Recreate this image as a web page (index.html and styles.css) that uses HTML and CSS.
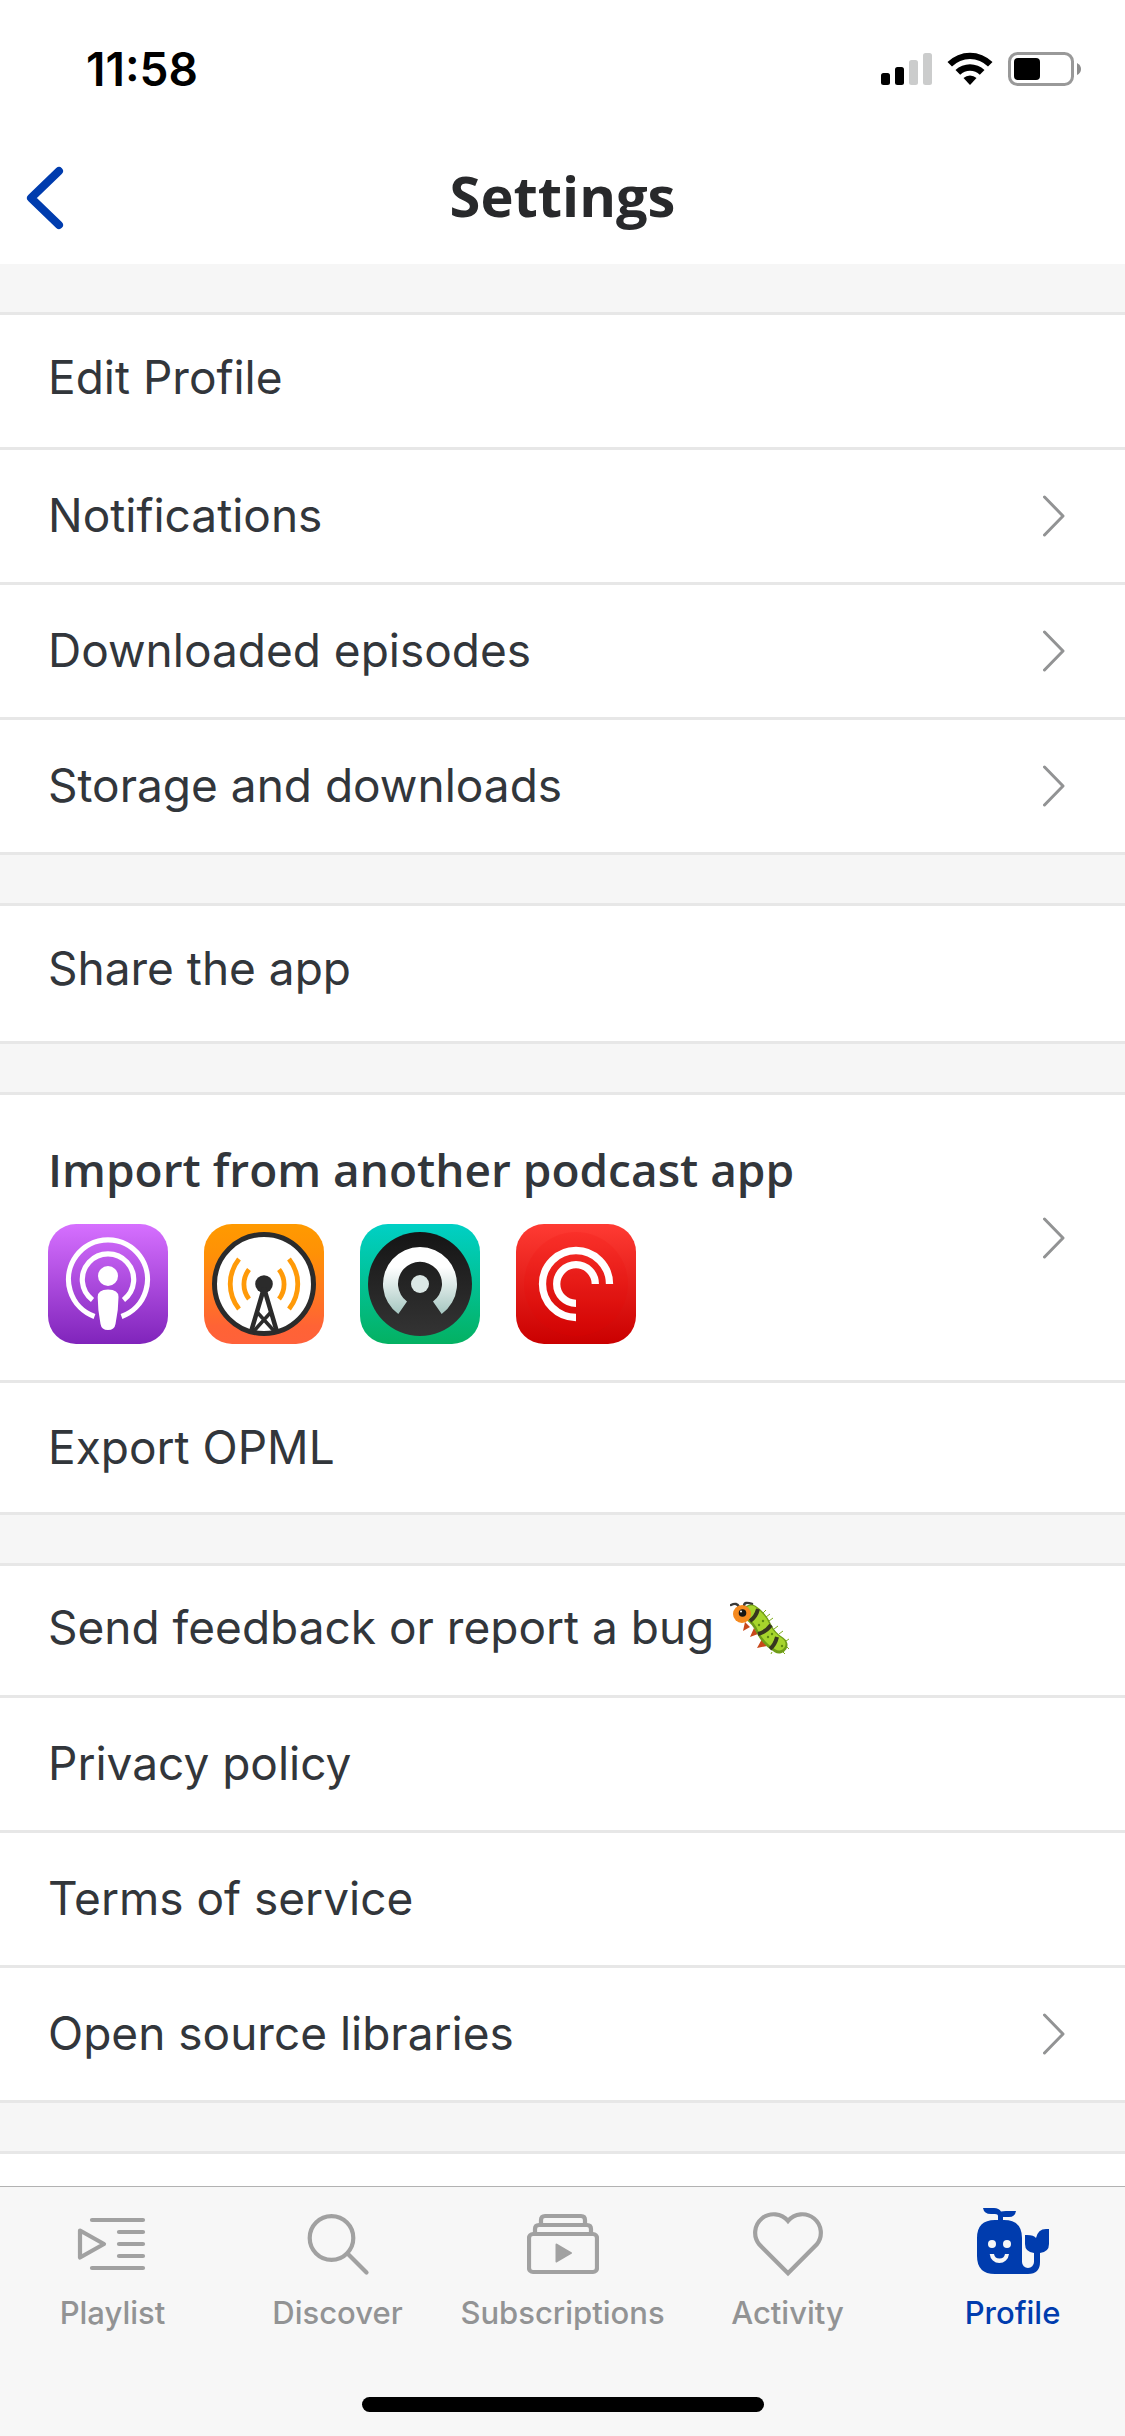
FILE: index.html
```html
<!DOCTYPE html>
<html lang="en">
<head>
  <meta charset="UTF-8">
  <meta name="viewport" content="width=device-width, initial-scale=1.0">
  <title>Settings</title>
  <link rel="stylesheet" href="styles.css">
</head>
<body>
  <!-- shared chevron -->
  <svg class="defs" width="0" height="0" aria-hidden="true">
    <symbol id="chevron" viewBox="0 0 22 42">
      <path d="M1.5 2 L20 21 L1.5 40" fill="none" stroke="#929394" stroke-width="3" stroke-linecap="round" stroke-linejoin="round"/>
    </symbol>
  </svg>

  <div class="status-bar">
    <span class="time">11:58</span>
    <div class="status-icons">
      <svg width="51" height="32" viewBox="0 0 51 32">
        <rect x="0" y="20" width="9" height="12" rx="2.5"/>
        <rect x="14" y="14" width="9" height="18" rx="2.5"/>
        <rect x="28" y="7" width="9" height="25" rx="2.5" fill="#cbcccc"/>
        <rect x="42" y="0" width="9" height="32" rx="2.5" fill="#cbcccc"/>
      </svg>
      <svg width="46" height="34" viewBox="0 0 46 34">
        <path d="M0.5 10 A32 32 0 0 1 45.500 10 L41 14.500 A25.500 25.500 0 0 0 5 14.500 Z"/>
        <path d="M8.500 18 A21 21 0 0 1 37.500 18 L32.800 22.700 A14 14 0 0 0 13.200 22.700 Z"/>
        <path d="M16.500 26 A9.500 9.500 0 0 1 29.500 26 L23 33 Z"/>
      </svg>
      <svg width="73" height="34" viewBox="0 0 73 34">
        <rect x="1.5" y="1.5" width="63" height="31" rx="8" fill="none" stroke="#999" stroke-width="3"/>
        <rect x="6" y="6" width="26" height="22" rx="4"/>
        <path d="M69 11 Q73 13 73 17 Q73 21 69 23 Z" fill="#8c8c8c"/>
      </svg>
    </div>
  </div>

  <header class="nav">
    <button class="back" aria-label="Back">
      <svg width="38" height="64" viewBox="0 0 38 64"><path d="M33 5 L5 32 L33 59" fill="none" stroke="#003cae" stroke-width="8" stroke-linecap="round" stroke-linejoin="round"/></svg>
    </button>
    <h1>Settings</h1>
  </header>

  <main>
    <section class="group">
      <a class="row" href="#"><span>Edit Profile</span></a>
      <a class="row" href="#"><span>Notifications</span><svg class="chevron"><use href="#chevron"/></svg></a>
      <a class="row" href="#"><span>Downloaded episodes</span><svg class="chevron"><use href="#chevron"/></svg></a>
      <a class="row" href="#"><span>Storage and downloads</span><svg class="chevron"><use href="#chevron"/></svg></a>
    </section>

    <section class="group">
      <a class="row tall" href="#"><span>Share the app</span></a>
    </section>

    <section class="group">
      <a class="row import" href="#">
        <div class="import-body">
          <h2>Import from another podcast app</h2>
          <div class="apps">
            <!-- Apple Podcasts -->
            <svg width="120" height="120" viewBox="0 0 120 120">
              <linearGradient id="g-podcasts" x1="0" y1="0" x2="0" y2="1"><stop offset="0" stop-color="#d670ff"/><stop offset="1" stop-color="#8024bb"/></linearGradient>
              <rect width="120" height="120" rx="28" fill="url(#g-podcasts)"/>
              <g fill="none" stroke="#fff" stroke-width="5.2">
                <path d="M46.500 92.500 A39.500 39.500 0 1 1 73.500 92.500"/>
                <path d="M44.500 76 A25.700 25.700 0 1 1 75.500 76"/>
              </g>
              <circle cx="60" cy="52" r="10" fill="#fff"/>
              <path d="M49.700 73 Q49.700 65.500 60 65.500 Q70.500 65.500 70.500 73 Q70.500 86 67.500 100 Q66.500 106 60 106 Q53.500 106 52.500 100 Q49.700 86 49.700 73 Z" fill="#fff"/>
            </svg>
            <!-- Overcast -->
            <svg width="120" height="120" viewBox="0 0 120 120">
              <linearGradient id="g-overcast" x1="0" y1="0" x2="0" y2="1"><stop offset="0" stop-color="#ff9a00"/><stop offset=".25" stop-color="#ff9106"/><stop offset=".85" stop-color="#ff6335"/><stop offset="1" stop-color="#ff613a"/></linearGradient>
              <rect width="120" height="120" rx="28" fill="url(#g-overcast)"/>
              <circle cx="60" cy="60" r="49.500" fill="#fff" stroke="#2b2b2b" stroke-width="5"/>
              <g fill="none" stroke="#ff9a08" stroke-width="4.800">
                <path d="M35 35 A40 40 0 0 0 35 85"/>
                <path d="M45 45.500 A24 24 0 0 0 45 75"/>
                <path d="M75 45.500 A24 24 0 0 1 75 75"/>
                <path d="M85 35 A40 40 0 0 1 85 85"/>
              </g>
              <circle cx="60" cy="60" r="8.800" fill="#2b2b2b"/>
              <g fill="none" stroke="#2b2b2b">
                <path d="M60 64 L47 108 M60 64 L73 108" stroke-width="4.500"/>
                <path d="M53 88 L71 108 M67 88 L49 108" stroke-width="3.500"/>
              </g>
            </svg>
            <!-- Castro -->
            <svg width="120" height="120" viewBox="0 0 120 120">
              <linearGradient id="g-castro" x1="0" y1="0" x2="0" y2="1"><stop offset="0" stop-color="#00d0c5"/><stop offset="1" stop-color="#04b162"/></linearGradient>
              <linearGradient id="g-disc" x1="0" y1="0" x2="0" y2="1"><stop offset="0" stop-color="#151515"/><stop offset="1" stop-color="#343434"/></linearGradient>
              <linearGradient id="g-ring" x1="0" y1="0" x2="0" y2="1"><stop offset=".3" stop-color="#fff"/><stop offset="1" stop-color="#a5c6c0"/></linearGradient>
              <rect width="120" height="120" rx="28" fill="url(#g-castro)"/>
              <circle cx="60" cy="60" r="52" fill="url(#g-disc)"/>
              <path d="M38.300 90 A37 37 0 1 1 81.700 90 L73 77.500 A22 22 0 1 0 47 77.500 Z" fill="url(#g-ring)"/>
              <circle cx="60" cy="60" r="9" fill="#dbe7e5"/>
            </svg>
            <!-- Pocket Casts -->
            <svg width="120" height="120" viewBox="0 0 120 120">
              <linearGradient id="g-pocket" x1="0" y1="0" x2="0" y2="1"><stop offset="0" stop-color="#ff3b33"/><stop offset="1" stop-color="#ca0000"/></linearGradient>
              <rect width="120" height="120" rx="28" fill="url(#g-pocket)"/>
              <circle cx="60" cy="60" r="52" fill="#e00" opacity=".12"/>
              <g fill="none" stroke="#fff" stroke-width="7.300">
                <path d="M60 93.500 A33.500 33.500 0 1 1 93.500 60"/>
                <path d="M60 79.300 A19.300 19.300 0 1 1 79.300 60"/>
              </g>
            </svg>
          </div>
        </div>
        <svg class="chevron"><use href="#chevron"/></svg>
      </a>
      <a class="row short" href="#"><span>Export OPML</span></a>
    </section>

    <section class="group">
      <a class="row short" href="#">
        <span>Send feedback or report a bug</span>
        <svg class="bug" width="60" height="56" viewBox="0 0 60 56" role="img" aria-label="caterpillar">
          <g fill="none" stroke="#3a3a38" stroke-width="2.500" stroke-linecap="round">
            <path d="M9 7 Q7 2 1 5"/>
            <path d="M14 6 Q14 1 22 4"/>
          </g>
          <path d="M15 22 L13 31 L20 27 Z M24 28 L20 37 L28 34 Z M32 39 L27 48 L37 46 Z" fill="#c8481b"/>
          <path d="M21 13 Q29 18 34 29 Q39 39 49 45" fill="none" stroke="#6f9c18" stroke-width="17" stroke-linecap="round"/>
          <path d="M21 12 Q30 18 34 28 Q39 38 49 44" fill="none" stroke="#a6d52c" stroke-width="13" stroke-linecap="round"/>
          <g fill="none" stroke="#37371f" stroke-width="4">
            <path d="M20 21 Q26 17 28 9"/>
            <path d="M28 34 Q36 32 41 25"/>
            <path d="M40 49 Q45 45 47 37"/>
          </g>
          <g stroke="#7fae1c" stroke-width="1">
            <path d="M33 13 l3 -3 M36 17 l4 -3 M39 21 l4 -3 M44 29 l4 -3 M49 34 l4 -3 M56 41 l3 -2 M57 47 l2 2 M53 52 l2 2 M42 52 l-1 2"/>
          </g>
          <g fill="#5d8b12">
            <circle cx="29" cy="25" r="1.200"/><circle cx="33" cy="21" r="1.200"/><circle cx="38" cy="37" r="1.200"/><circle cx="42" cy="34" r="1.200"/><circle cx="52" cy="46" r="1.200"/>
          </g>
          <circle cx="12" cy="14" r="9" fill="#f58a1f"/>
          <circle cx="12.500" cy="13" r="3.800" fill="#151515"/>
          <circle cx="11" cy="11.500" r="1" fill="#fff"/>
        </svg>
      </a>
      <a class="row" href="#"><span>Privacy policy</span></a>
      <a class="row" href="#"><span>Terms of service</span></a>
      <a class="row" href="#"><span>Open source libraries</span><svg class="chevron"><use href="#chevron"/></svg></a>
    </section>

    <section class="group rest"></section>
  </main>

  <nav class="tab-bar">
    <div class="tabs">
      <a class="tab" href="#">
        <svg viewBox="0 0 72 72">
          <path d="M15 12 H66 M42 24 H66 M42 36 H66 M42 48 H66 M15 60 H66"/>
          <path d="M3 22.500 L27 36 L3 49.500 Z"/>
        </svg>
        <span>Playlist</span>
      </a>
      <a class="tab" href="#">
        <svg viewBox="0 0 72 72">
          <circle cx="29.500" cy="30" r="21.800"/>
          <path d="M46 46 L64.500 64.500"/>
        </svg>
        <span>Discover</span>
      </a>
      <a class="tab" href="#">
        <svg viewBox="0 0 72 72">
          <rect x="2" y="26" width="68" height="38" rx="4"/>
          <path d="M8 25 V21 Q8 17 12 17 H60 Q64 17 64 21 V25"/>
          <path d="M14 16 V12 Q14 8 18 8 H54 Q58 8 58 12 V16"/>
          <path d="M29.500 36.500 L44 45 L29.500 53.500 Z" fill="#a1a1a1" stroke-width="2"/>
        </svg>
        <span>Subscriptions</span>
      </a>
      <a class="tab" href="#">
        <svg viewBox="0 0 72 72">
          <path d="M36 13 A18.500 18.500 0 1 0 7.400 36.600 L36 65.300 L64.600 36.600 A18.500 18.500 0 1 0 36 13 Z" stroke-linejoin="miter"/>
        </svg>
        <span>Activity</span>
      </a>
      <a class="tab active" href="#">
        <svg viewBox="0 0 72 72">
          <path d="M0 30 Q0 12 18 12 H21 V8 Q21 6 18 6 H14 Q7 6 6 0 H17 Q22 0 24 3.500 Q26 3 29 3 H39 Q38 9 32 9 H26 V12 H27 Q45 12 45 30 V54 A6 6 0 0 0 57 54 V45 Q48 44 48 36 V27 H50 Q57 27 59 30 Q61 21 69 21 H72 V36 Q72 44 63 45 V54 Q63 66 51 66 H18 Q0 66 0 48 Z"/>
          <circle cx="15" cy="36" r="4" fill="#f7f7f7"/>
          <circle cx="30" cy="36" r="4" fill="#f7f7f7"/>
          <path d="M12.700 46 A9.700 10 0 0 0 32 46 H28 A5.600 5.600 0 0 1 17 46 Z" fill="#f7f7f7"/>
        </svg>
        <span>Profile</span>
      </a>
    </div>
    <div class="home-indicator"></div>
  </nav>
</body>
</html>
```
FILE: styles.css
```css
* {
  box-sizing: border-box;
}

body {
  margin: 0;
  min-height: 100vh;
  display: flex;
  flex-direction: column;
  font-family: Inter, "Liberation Sans", sans-serif;
  color: #32363b;
  background: #fff;
}

a {
  color: inherit;
  text-decoration: none;
}

svg {
  display: block;
  flex-shrink: 0;
}

.defs {
  position: absolute;
}

/* Status bar */
.status-bar {
  display: flex;
  justify-content: space-between;
  align-items: center;
  height: 132px;
  padding: 6px 44px 0 86px;
  color: #000;
}

.time {
  font-size: 46px;
  font-weight: 600;
}

.status-icons {
  display: flex;
  align-items: center;
  gap: 15px;
}

/* Header */
.nav {
  display: grid;
  grid-template-columns: 96px 1fr 96px;
  align-items: center;
  height: 132px;
}

.back {
  padding: 0 0 0 26px;
  border: none;
  background: none;
  cursor: pointer;
}

h1,
h2 {
  margin: 0;
  font-family: "Open Sans", "Noto Sans", sans-serif;
}

h1 {
  padding-bottom: 6px;
  font-size: 56px;
  line-height: 72px;
  font-weight: 700;
  text-align: center;
  color: #28292b;
}

/* Settings list */
main {
  flex: 1;
  display: flex;
  flex-direction: column;
  gap: 48px;
  padding-top: 48px;
  background: #f6f6f6;
}

.group {
  background: #fff;
  border-bottom: 3px solid #e7e7e7;
}

.row {
  display: flex;
  justify-content: space-between;
  align-items: center;
  min-height: 135px;
  padding: 0 60px 0 48px;
  border-top: 3px solid #e7e7e7;
  font-size: 46px;
  line-height: 60px;
}

.row span {
  padding-bottom: 2px;
}

.row:first-child {
  padding-bottom: 6px;
}

.row.short {
  min-height: 132px;
}

.row.tall {
  min-height: 138px;
  padding-bottom: 10px;
}

.row.import {
  padding-top: 36px;
  padding-bottom: 36px;
}

.import-body {
  padding-top: 8px;
}

.chevron {
  width: 22px;
  height: 42px;
}

.bug {
  margin-left: 16px;
  margin-right: auto;
}

h2 {
  margin-bottom: 25px;
  font-size: 46px;
  line-height: 60px;
  font-weight: 600;
}

.apps {
  display: flex;
  gap: 36px;
}

.rest {
  flex: 1;
  min-height: 35px;
  border-top: 3px solid #e7e7e7;
  border-bottom: none;
}

/* Tab bar */
.tab-bar {
  position: sticky;
  bottom: 0;
  height: 250px;
  padding-top: 21px;
  background: #f7f7f7;
  border-top: 1px solid #b2b2b2;
}

.tabs {
  display: grid;
  grid-template-columns: repeat(5, 1fr);
}

.tab {
  display: flex;
  flex-direction: column;
  align-items: center;
  gap: 15px;
  font-size: 31px;
  line-height: 36px;
  font-weight: 500;
  color: #929394;
}

.tab svg {
  width: 72px;
  height: 72px;
  fill: none;
  stroke: #a1a1a1;
  stroke-width: 4.2;
  stroke-linecap: round;
  stroke-linejoin: round;
}

.tab.active {
  color: #003cae;
}

.tab.active svg {
  fill: #003cae;
  stroke: none;
}

.home-indicator {
  width: 402px;
  height: 15px;
  margin: 66px auto 0;
  border-radius: 8px;
  background: #000;
}
```
